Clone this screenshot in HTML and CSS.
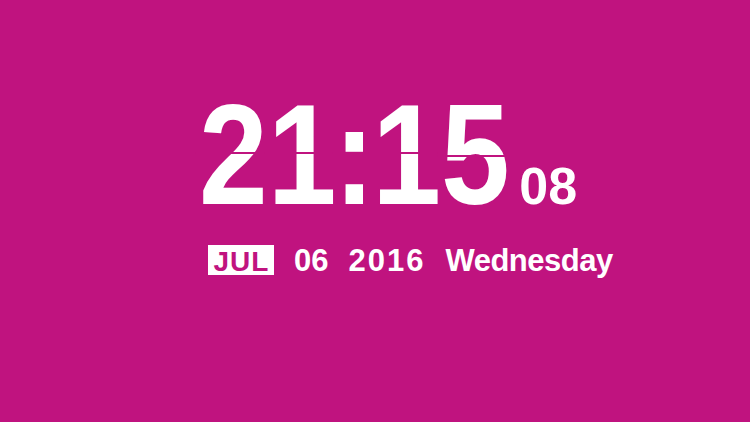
FILE: index.html
```html
<!DOCTYPE html>
<html>
<head>
<meta charset="utf-8">
<link rel="stylesheet" href="styles.css">
</head>
<body>
<main class="clock">
  <div class="time-row">
    <span class="hm">
      <span class="dg dg-a">2</span><span class="dg dg-a">1</span><span class="colon">:</span><span class="dg dg-a">1</span><span class="dg dg-b">5</span>
    </span>
    <span class="sec">08</span>
  </div>
  <div class="date-row">
    <span class="month">JUL</span>
    <span class="day">06</span>
    <span class="year">2016</span>
    <span class="weekday">Wednesday</span>
  </div>
</main>
</body>
</html>
```
FILE: styles.css
```css
html, body {
  margin: 0;
  padding: 0;
  height: 100%;
}
body {
  background: #c0137f;
  color: #ffffff;
  font-family: "Liberation Sans", Arial, sans-serif;
  font-weight: bold;
  overflow: hidden;
}
.clock {
  display: flex;
  flex-direction: column;
  padding-top: 85px;
  padding-left: 199px;
}
.time-row {
  display: flex;
  align-items: baseline;
  height: 140px;
  line-height: 140px;
}
.hm {
  font-size: 142px;
  display: inline-block;
  white-space: nowrap;
  transform: scaleX(0.87);
  transform-origin: left center;
  margin-right: -46px;
}
.dg {
  position: relative;
  display: inline-block;
}
.dg::after {
  content: "";
  position: absolute;
  left: -4px;
  right: 4px;
  height: 2px;
  background: #c0137f;
}
.dg-a::after { top: 67px; }
.dg-b::after { top: 70px; }
.colon {
  margin: 0 -3px;
}
.sec {
  font-size: 52px;
  margin-left: 9px;
}
.date-row {
  display: flex;
  align-items: baseline;
  gap: 20px;
  margin-top: 20px;
  margin-left: 9px;
  font-size: 31px;
  line-height: 30px;
}
.month {
  background: #ffffff;
  color: #c0137f;
  font-size: 28px;
  letter-spacing: 1px;
  box-sizing: border-box;
  width: 66px;
  height: 30px;
  padding-top: 2px;
  padding-left: 1px;
  line-height: 30px;
  text-align: center;
}
.year {
  letter-spacing: 2px;
}
.weekday {
  letter-spacing: -0.5px;
}
```
